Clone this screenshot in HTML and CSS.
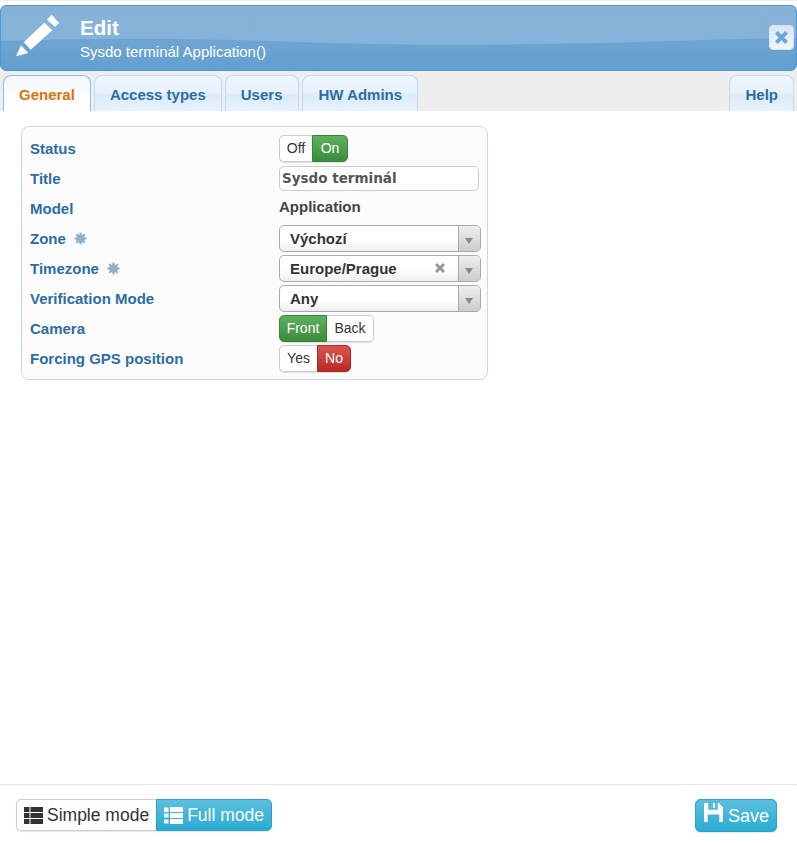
FILE: index.html
```html
<!DOCTYPE html>
<html lang="cs">
<head>
<meta charset="utf-8">
<title>Edit</title>
<link rel="stylesheet" href="styles.css">
</head>
<body>
<div class="page">
  <header class="head">
    <svg class="gloss" viewBox="0 0 797 66" preserveAspectRatio="none"><defs><linearGradient id="sheen" x1="0" y1="0" x2="0" y2="1"><stop offset="0" stop-color="#fff" stop-opacity=".1"/><stop offset="1" stop-color="#fff" stop-opacity=".17"/></linearGradient></defs><path d="M0 36C100 33 190 33 300 37S480 40 560 39 720 34 797 33V0H0Z" fill="url(#sheen)"/></svg>
    <svg class="pencil" viewBox="0 0 44 44"><path d="M35.700 .7 43 9 39 13 31 5.700ZM28.300 8.700 36.300 16.300 14.700 35.700 7.700 28.300ZM5 31.300 12.300 39 0 42.300Z" fill="#fff"/></svg>
    <div class="head-text">
      <div class="head-title">Edit</div>
      <div class="head-sub">Sysdo terminál Application()</div>
    </div>
    <button class="close" aria-label="Close"><svg viewBox="0 0 12 12"><path d="M0 2.500 2.500 0 6 3.500 9.500 0 12 2.500 8.500 6 12 9.500 9.500 12 6 8.500 2.500 12 0 9.500 3.500 6Z" fill="#6ea6d2"/></svg></button>
  </header>

  <nav class="tabs">
    <a class="tab active">General</a>
    <a class="tab">Access types</a>
    <a class="tab tab-users">Users</a>
    <a class="tab">HW Admins</a>
    <a class="tab help">Help</a>
  </nav>

  <main class="content">
    <section class="card">
      <div class="row"><span class="lbl">Status</span><div class="ctl"><div class="toggle"><span class="opt w33">Off</span><span class="opt green w36">On</span></div></div></div>
      <div class="row"><span class="lbl">Title</span><div class="ctl"><div class="input">Sysdo terminál</div></div></div>
      <div class="row"><span class="lbl">Model</span><div class="ctl"><span class="value">Application</span></div></div>
      <div class="row"><span class="lbl">Zone<svg class="req" viewBox="0 0 14 14"><use href="#gear"/></svg></span><div class="ctl"><div class="select"><span class="sel-text">Výchozí</span><span class="arrow"></span></div></div></div>
      <div class="row"><span class="lbl">Timezone<svg class="req" viewBox="0 0 14 14"><use href="#gear"/></svg></span><div class="ctl"><div class="select"><span class="sel-text">Europe/Prague</span><svg class="clear" viewBox="0 0 12 12"><path d="M0 2.500 2.500 0 6 3.500 9.500 0 12 2.500 8.500 6 12 9.500 9.500 12 6 8.500 2.500 12 0 9.500 3.500 6Z" fill="#999"/></svg><span class="arrow"></span></div></div></div>
      <div class="row"><span class="lbl">Verification Mode</span><div class="ctl"><div class="select"><span class="sel-text">Any</span><span class="arrow"></span></div></div></div>
      <div class="row"><span class="lbl">Camera</span><div class="ctl"><div class="toggle"><span class="opt green w48">Front</span><span class="opt w47">Back</span></div></div></div>
      <div class="row"><span class="lbl">Forcing GPS position</span><div class="ctl"><div class="toggle"><span class="opt w38">Yes</span><span class="opt red w34">No</span></div></div></div>
    </section>
  </main>

  <footer class="foot">
    <div class="modes">
      <button class="btn mode"><svg class="ic" viewBox="0 0 19 17"><path d="M0 0H5.500V5H0ZM6.500 0H19V5H6.500ZM0 6H5.500V11H0ZM6.500 6H19V11H6.500ZM0 12H5.500V17H0ZM6.500 12H19V17H6.500Z" fill="#333"/></svg>Simple mode</button>
      <button class="btn mode blue"><svg class="ic" viewBox="0 0 19 17"><path d="M0 .5H4.500V5H0ZM6 0H19V5H6ZM0 6.500H4.500V10.500H0ZM6 6H19V11H6ZM0 12.500H4.500V16.500H0ZM6 12H19V17H6Z" fill="#fff"/></svg>Full mode</button>
    </div>
    <button class="btn save blue"><svg class="save-ic" viewBox="0 0 18 18"><path fill-rule="evenodd" d="M0 1Q0 0 1 0H14L18 4V17Q18 18 17 18H1Q0 18 0 17ZM4 0V6.500H13V0H10.500V4.500H8.500V0ZM3.500 11V18H14.500V11Z" fill="#fff"/></svg><span class="save-text">Save</span></button>
  </footer>
</div>
<svg class="defs" aria-hidden="true"><defs><g id="gear"><circle cx="7" cy="7" r="4.700" fill="#90b0cb"/><path d="M7 0.500V13.500M0.500 7H13.500M2.400 2.400 11.600 11.600M11.600 2.400 2.400 11.600" stroke="#90b0cb" stroke-width="2.200"/></g></defs></svg>
</body>
</html>
```
FILE: styles.css
```css
* { box-sizing: border-box; }
html, body { margin: 0; height: 100%; }
body { font-family: "Liberation Sans", Arial, sans-serif; color: #333; background: #fff; }
.defs { display: none; }
.page { height: 843px; display: flex; flex-direction: column; padding-top: 5px; border-top: 1px solid #eee; overflow: hidden; background: #fff; }

.head { position: relative; height: 66px; margin-top: -1px; flex: none; display: flex; align-items: flex-start; border: 1px solid #4a98d6; border-radius: 6px; background: linear-gradient(#7aaad3, #639fd0); color: #fff; overflow: hidden; }
.gloss { position: absolute; left: 0; top: 0; width: 100%; height: 100%; }
.pencil { position: relative; width: 44px; height: 44px; margin: 8px 0 0 15px; flex: none; }
.head-text { position: relative; margin: 10px 0 0 20px; }
.head-title { font-size: 20.500px; font-weight: 700; line-height: 24px; }
.head-sub { font-size: 15px; line-height: 20px; margin-top: 2px; }
.close { position: absolute; right: 2px; top: 19px; width: 25px; height: 25px; padding: 0; border: 1px solid #d5e4f1; border-radius: 4px; background: linear-gradient(#d8e6f2, #eef6fd); display: flex; align-items: center; justify-content: center; }
.close svg { width: 13px; height: 13px; }

.tabs { height: 40px; flex: none; display: flex; gap: 3px; padding: 4px 3px 0; background: #eee; }
.tab { height: 36px; padding: 0 15px; border: 1px solid #c5dbee; border-bottom: 0; border-radius: 8px 8px 0 0; background: linear-gradient(#eef6fd 0, #e6f2fc 48%, #dcebf8 55%, #e6f2fd 100%); color: #2e6da4; font-size: 15px; font-weight: 700; line-height: 37px; white-space: nowrap; }
.tab.active { background: linear-gradient(#f2f7fb, #fff); border-color: #8fbfe6; color: #e17009; }
.tab-users { padding-right: 16px; }
.tab.help { margin-left: auto; }

.content { flex: 1; padding: 15px 0 0 21px; }
.card { width: 467px; height: 254px; padding: 6px 0 0 8px; border: 1px solid #c6daea; border-radius: 8px; background: #fbfbfb; }
.row { height: 30px; display: flex; align-items: center; }
.lbl { width: 249px; display: flex; align-items: center; color: #2e6da4; font-size: 15px; font-weight: 700; }
.req { width: 13px; height: 13px; margin-left: 8px; }
.ctl { flex: 1; display: flex; }

.toggle { display: flex; height: 27px; border-radius: 5px; font-size: 14px; box-shadow: 0 1px 1px rgba(0,0,0,.12); }
.opt { line-height: 25px; text-align: center; background: #fff; border: 1px solid #ccc; color: #333; }
.opt:first-child { border-radius: 5px 0 0 5px; border-right: 0; }
.opt:last-child { border-radius: 0 5px 5px 0; border-left: 0; }
.opt.green { background: linear-gradient(#5cb25c, #3d8b3d); border: 1px solid #398439; color: #fff; }
.opt.red { background: linear-gradient(#d9534f, #b92c28); border: 1px solid #ac2925; color: #fff; }
.w33 { width: 33px; }
.w34 { width: 34px; }
.w36 { width: 36px; }
.w38 { width: 38px; }
.w47 { width: 47px; }
.w48 { width: 48px; }

.input { width: 200px; height: 25px; padding-left: 2px; border: 1px solid #ccc; border-radius: 5px; background: #fff; color: #555; font-family: "DejaVu Sans", sans-serif; font-size: 13.500px; font-weight: 700; line-height: 23px; }
.value { font-size: 15px; font-weight: 700; color: #444; position: relative; top: -2px; }

.select { width: 202px; height: 27px; display: flex; align-items: center; border: 1px solid #aaa; border-radius: 5px; background: linear-gradient(#fff 55%, #eee); color: #333; font-size: 15px; font-weight: 700; overflow: hidden; }
.sel-text { flex: 1; padding: 1px 0 0 10px; }
.clear { width: 10px; height: 10px; margin-right: 13px; }
.arrow { width: 22px; height: 100%; border-left: 1px solid #aaa; background: linear-gradient(#eee, #ccc); position: relative; }
.arrow::after { content: ""; position: absolute; left: 6px; top: 12px; border: 4px solid transparent; border-top: 6px solid #888; border-bottom: 0; }

.foot { height: 59px; flex: none; display: flex; justify-content: space-between; align-items: flex-start; padding: 14px 20px 0 16px; border-top: 1px solid #e5e5e5; }
.modes { display: flex; }
.btn { height: 32px; display: flex; align-items: center; gap: 4px; padding: 0 7px; border: 1px solid #ccc; font-family: inherit; font-size: 17.500px; color: #333; background: #fff; box-shadow: 0 1px 1px rgba(0,0,0,.1); }
.ic { width: 19px; height: 17px; }
.mode:first-child { border-radius: 5px 0 0 5px; border-right: 0; }
.mode:last-child { border-radius: 0 5px 5px 0; border-left: 0; }
.btn.blue { background: linear-gradient(#5bc0de, #2aabd2); border: 1px solid #28a4c9; color: #fff; }
.save { height: 33px; border-radius: 5px; padding: 0 7px 0 8px; gap: 5px; font-size: 18px; }
.save-ic { width: 19px; height: 19px; margin-top: -6px; }
.save-text { margin-top: 2px; }
```
